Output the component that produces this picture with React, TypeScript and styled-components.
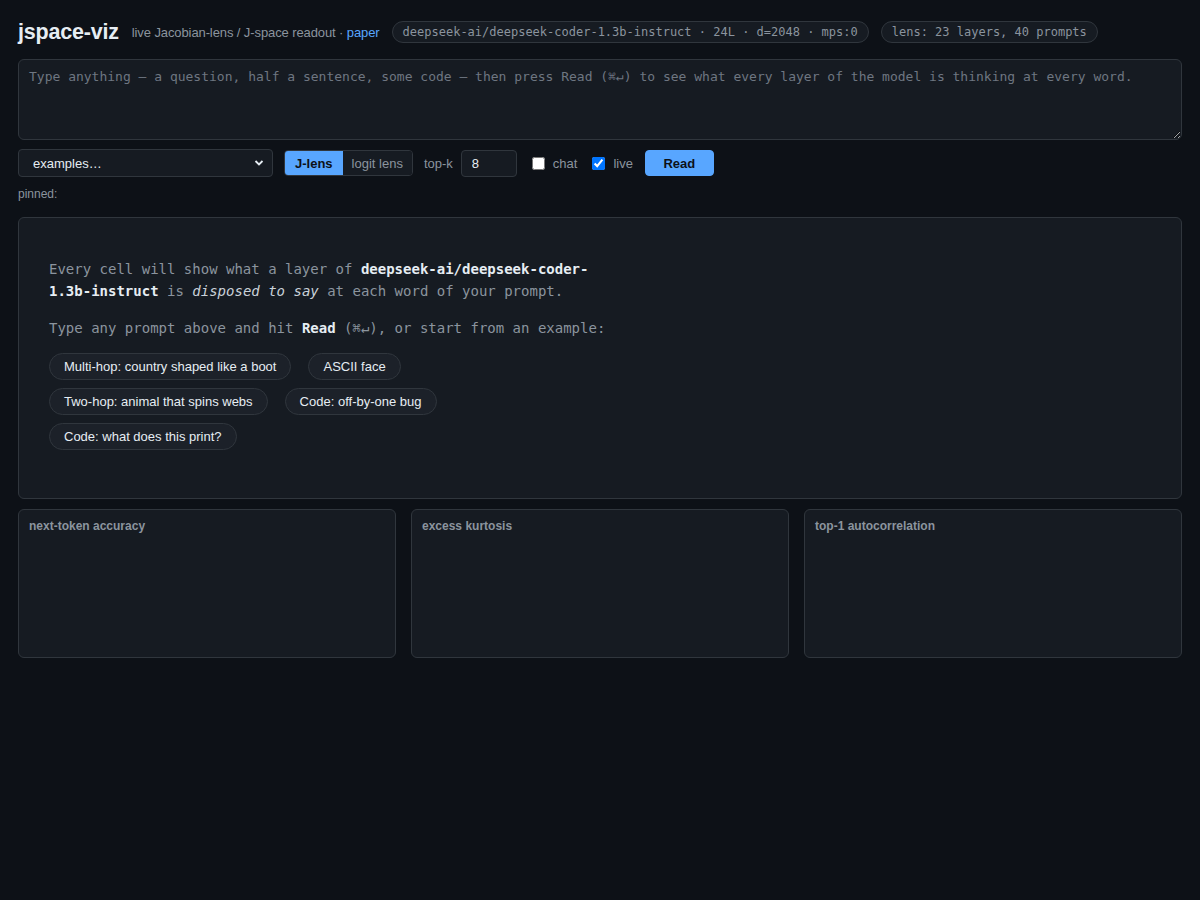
import * as React from 'react';
import styled, {createGlobalStyle} from 'styled-components';

const GlobalStyle = createGlobalStyle`
  html, body {
    margin: 0;
    padding: 0;
    background: #0d1117;
    color: #c9d1d9;
    font-family: "Liberation Sans", Arial, sans-serif;
  }
`;

const mono = `"DejaVu Sans Mono", "Liberation Mono", monospace`;

const Page = styled.div`
  min-height: 900px;
  box-sizing: border-box;
  padding: 18px 18px;
`;

const Header = styled.header`
  display: flex;
  align-items: center;
  gap: 12px;
  height: 28px;
  margin-bottom: 13px;
`;

const Title = styled.h1`
  margin: 0 1px 0 0;
  font-size: 21.5px;
  font-weight: bold;
  color: #e6edf3;
  letter-spacing: -0.2px;
`;

const Subtitle = styled.span`
  font-size: 13px;
  letter-spacing: -0.1px;
  color: #8b949e;

  a {
    color: #58a6ff;
    text-decoration: none;
  }
`;

const Pill = styled.span`
  font-family: ${mono};
  font-size: 12px;
  color: #8b949e;
  background: #161b22;
  border: 1px solid #30363d;
  border-radius: 11px;
  padding: 3px 10px;
  line-height: 14px;
`;

const Prompt = styled.textarea`
  display: block;
  box-sizing: border-box;
  width: 100%;
  height: 81px;
  margin: 0;
  padding: 8px 10px;
  background: #161b22;
  border: 1px solid #30363d;
  border-radius: 6px;
  color: #e6edf3;
  font-family: ${mono};
  font-size: 13px;
  line-height: 18px;
  outline: none;

  &::placeholder {
    color: #6e7681;
  }
`;

const Controls = styled.div`
  display: flex;
  align-items: center;
  margin-top: 9px;
  height: 28px;
  font-size: 13px;
`;

const SelectWrap = styled.div`
  position: relative;
  width: 255px;
  height: 28px;
  margin-right: 11px;
`;

const Select = styled.select`
  appearance: none;
  width: 100%;
  height: 100%;
  box-sizing: border-box;
  background: #161b22;
  border: 1px solid #30363d;
  border-radius: 4px;
  color: #e6edf3;
  font-family: "Liberation Sans", Arial, sans-serif;
  font-size: 13px;
  padding: 0 14px;
  outline: none;
`;

const Chevron = styled.svg`
  position: absolute;
  right: 9px;
  top: 10px;
  pointer-events: none;
`;

const Segmented = styled.div`
  display: flex;
  height: 26px;
  border: 1px solid #30363d;
  border-radius: 4px;
  overflow: hidden;
  box-sizing: border-box;
`;

const SegButton = styled.button<{$active?: boolean}>`
  border: none;
  margin: 0;
  padding: 0 ${p => (p.$active ? '10px' : '9px')};
  font-family: "Liberation Sans", Arial, sans-serif;
  font-size: 13px;
  font-weight: ${p => (p.$active ? 'bold' : 'normal')};
  background: ${p => (p.$active ? '#58a6ff' : '#161b22')};
  color: ${p => (p.$active ? '#0d1117' : '#8b949e')};
`;

const Label = styled.label<{$ml: number; $gap: number}>`
  display: flex;
  align-items: center;
  gap: ${p => p.$gap}px;
  color: #8b949e;
  font-size: 13px;
  margin-left: ${p => p.$ml}px;
`;

const TopK = styled.input`
  box-sizing: border-box;
  width: 56px;
  height: 27px;
  background: #161b22;
  border: 1px solid #30363d;
  border-radius: 4px;
  color: #e6edf3;
  font-family: "Liberation Sans", Arial, sans-serif;
  font-size: 13px;
  padding: 0 10px;
  outline: none;
`;

const Check = styled.input`
  margin: 0;
  width: 13px;
  height: 13px;
`;

const ReadButton = styled.button`
  margin-left: 12px;
  width: 69px;
  height: 26px;
  border: 1px solid #58a6ff;
  border-radius: 4px;
  background: #58a6ff;
  color: #0d1117;
  font-family: "Liberation Sans", Arial, sans-serif;
  font-size: 13px;
  font-weight: bold;
`;

const Pinned = styled.div`
  margin-top: 10px;
  font-size: 12px;
  color: #8b949e;
  height: 16px;
`;

const Panel = styled.section`
  margin-top: 14px;
  box-sizing: border-box;
  height: 282px;
  background: #161b22;
  border: 1px solid #30363d;
  border-radius: 6px;
  padding: 40px 30px;
`;

const Intro = styled.div`
  max-width: 565px;
  font-family: ${mono};
  font-size: 14px;
  line-height: 22px;
  color: #8b949e;

  p {
    margin: 0 0 15px;
  }

  b {
    color: #e6edf3;
  }

  i {
    color: #c9d1d9;
  }
`;

const Chips = styled.div`
  display: flex;
  flex-wrap: wrap;
  gap: 8px 17px;
  max-width: 565px;
  margin-top: -1px;
`;

const Chip = styled.button`
  height: 27px;
  box-sizing: border-box;
  padding: 0 14px;
  border: 1px solid #30363d;
  border-radius: 14px;
  background: #1c2129;
  color: #e6edf3;
  font-family: "Liberation Sans", Arial, sans-serif;
  font-size: 13px;
`;

const Charts = styled.div`
  display: grid;
  grid-template-columns: repeat(3, 1fr);
  gap: 15px;
  margin-top: 10px;
`;

const ChartCard = styled.div`
  box-sizing: border-box;
  height: 149px;
  background: #161b22;
  border: 1px solid #30363d;
  border-radius: 6px;
  padding: 9px 10px;
`;

const ChartTitle = styled.div`
  font-size: 12px;
  font-weight: bold;
  color: #8b949e;
`;

const examples = [
  'Multi-hop: country shaped like a boot',
  'ASCII face',
  'Two-hop: animal that spins webs',
  'Code: off-by-one bug',
  'Code: what does this print?',
];

const charts = ['next-token accuracy', 'excess kurtosis', 'top-1 autocorrelation'];

export default function App() {
  const [lens, setLens] = React.useState<'j' | 'logit'>('j');

  return (
    <Page>
      <GlobalStyle />
      <Header>
        <Title>jspace-viz</Title>
        <Subtitle>
          live Jacobian-lens / J-space readout · <a href="#">paper</a>
        </Subtitle>
        <Pill>deepseek-ai/deepseek-coder-1.3b-instruct · 24L · d=2048 · mps:0</Pill>
        <Pill>lens: 23 layers, 40 prompts</Pill>
      </Header>

      <Prompt placeholder="Type anything — a question, half a sentence, some code — then press Read (⌘↵) to see what every layer of the model is thinking at every word." />

      <Controls>
        <SelectWrap>
          <Select defaultValue="">
            <option value="">examples…</option>
            {examples.map(e => (
              <option key={e}>{e}</option>
            ))}
          </Select>
          <Chevron width="10" height="8" viewBox="0 0 10 8">
            <path d="M1.5 2 L5 5.5 L8.5 2" fill="none" stroke="#e6edf3" strokeWidth="1.8" />
          </Chevron>
        </SelectWrap>
        <Segmented>
          <SegButton $active={lens === 'j'} onClick={() => setLens('j')}>J-lens</SegButton>
          <SegButton $active={lens === 'logit'} onClick={() => setLens('logit')}>logit lens</SegButton>
        </Segmented>
        <Label $ml={11} $gap={8}>
          top-k
          <TopK defaultValue="8" />
        </Label>
        <Label $ml={15} $gap={8}>
          <Check type="checkbox" />
          chat
        </Label>
        <Label $ml={15} $gap={8}>
          <Check type="checkbox" defaultChecked />
          live
        </Label>
        <ReadButton>Read</ReadButton>
      </Controls>

      <Pinned>pinned:</Pinned>

      <Panel>
        <Intro>
          <p>
            Every cell will show what a layer of <b>deepseek-ai/deepseek-coder-1.3b-instruct</b> is{' '}
            <i>disposed to say</i> at each word of your prompt.
          </p>
          <p>
            Type any prompt above and hit <b>Read</b> (⌘↵), or start from an example:
          </p>
        </Intro>
        <Chips>
          {examples.map(e => (
            <Chip key={e}>{e}</Chip>
          ))}
        </Chips>
      </Panel>

      <Charts>
        {charts.map(c => (
          <ChartCard key={c}>
            <ChartTitle>{c}</ChartTitle>
          </ChartCard>
        ))}
      </Charts>
    </Page>
  );
}
